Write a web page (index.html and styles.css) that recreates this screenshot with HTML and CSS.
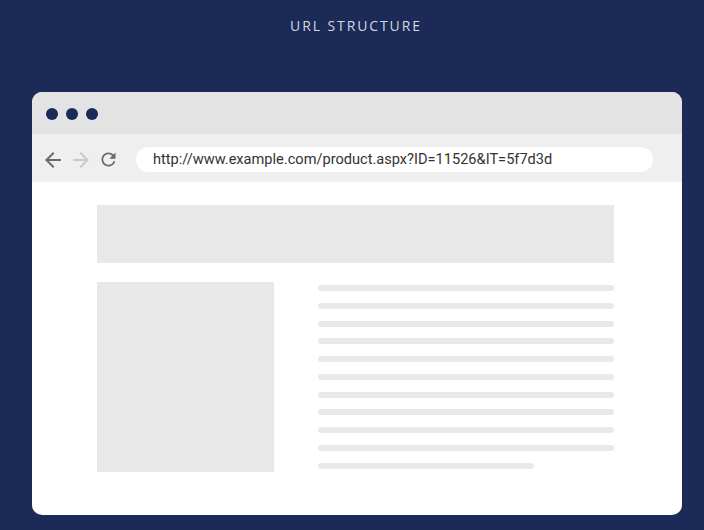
FILE: index.html
```html
<!DOCTYPE html>
<html lang="en">
<head>
<meta charset="UTF-8" />
<meta name="viewport" content="width=device-width, initial-scale=1.0" />
<title>URL Structure</title>
<link rel="stylesheet" href="styles.css">
</head>
<body>
<h1 class="title">URL STRUCTURE</h1>
<div class="window">
<div class="titlebar">
<span class="dot"></span><span class="dot"></span><span class="dot"></span>
</div>
<div class="toolbar">
<svg class="icon back" viewBox="0 0 24 24"><path d="M20 11H7.83l5.59-5.59L12 4l-8 8 8 8 1.41-1.41L7.83 13H20v-2z"/></svg>
<svg class="icon forward" viewBox="0 0 24 24"><path d="M4 11h12.17l-5.59-5.59L12 4l8 8-8 8-1.41-1.41L16.17 13H4v-2z"/></svg>
<svg class="icon reload" viewBox="0 0 24 24"><path d="M17.65 6.35A7.958 7.958 0 0012 4c-4.42 0-7.99 3.58-7.99 8s3.57 8 7.99 8c3.73 0 6.84-2.55 7.73-6h-2.08A5.99 5.99 0 0112 18c-3.310 0-6-2.69-6-6s2.69-6 6-6c1.66 0 3.14.69 4.22 1.78L13 11h7V4l-2.35 2.35z"/></svg>
<div class="address">http://www.example.com/product.aspx?ID=11526&amp;IT=5f7d3d</div>
</div>
<div class="page">
<div class="banner"></div>
<div class="row">
<div class="image"></div>
<ul class="lines">
<li></li><li></li><li></li><li></li><li></li><li></li>
<li></li><li></li><li></li><li></li><li class="short"></li>
</ul>
</div>
</div>
</div>
</body>
</html>
```

FILE: styles.css
```css
* {
margin: 0;
padding: 0;
box-sizing: border-box;
}
body {
width: 100%;
height: 100vh;
background: #1b2a56;
font-family: Roboto, "Liberation Sans", sans-serif;
overflow: hidden;
}
.title {
height: 92px;
padding-top: 16px;
padding-left: 8px;
text-align: center;
font-family: "Open Sans", sans-serif;
font-weight: 400;
font-size: 14px;
letter-spacing: 1.9px;
color: #d3d8e3;
}
.window {
margin-left: 32px;
width: 650px;
height: 423px;
background: #fff;
border-radius: 10px;
overflow: hidden;
}
.titlebar {
height: 42px;
background: #e3e3e3;
display: flex;
align-items: center;
gap: 8px;
padding-left: 14px;
padding-top: 1px;
}
.dot {
width: 12px;
height: 12px;
border-radius: 50%;
background: #1b2a56;
}
.toolbar {
height: 48px;
background: #efefef;
display: flex;
align-items: center;
padding-left: 9px;
padding-top: 3px;
}
.icon {
width: 24px;
height: 24px;
margin-right: 4px;
}
.back { fill: #6a6a6a; }
.forward { fill: #c9c9c9; }
.reload {
fill: #6a6a6a;
width: 21px;
height: 21px;
margin-left: 1px;
}
.address {
margin-left: 13px;
width: 517px;
height: 25px;
border-radius: 13px;
background: #fff;
padding-left: 17px;
font-size: 14.6px;
line-height: 25px;
color: #333;
}
.page {
padding: 23px 68px 0 65px;
}
.banner {
height: 58px;
background: #e8e8e8;
}
.row {
display: flex;
gap: 44px;
margin-top: 19px;
}
.image {
width: 177px;
height: 190px;
background: #e8e8e8;
}
.lines {
flex: 1;
list-style: none;
padding-top: 3px;
}
.lines li {
height: 6px;
border-radius: 3px;
background: #e9e9e9;
margin-bottom: 11.75px;
}
.lines li.short {
width: 216px;
}
```
